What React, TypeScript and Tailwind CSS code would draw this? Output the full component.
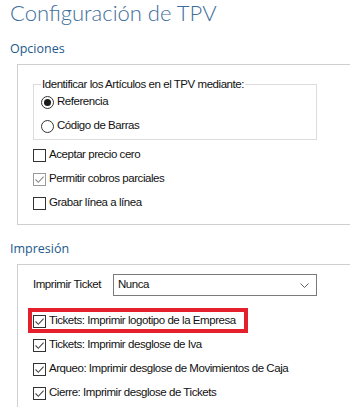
import React from "react";

const ui = "font-['Liberation_Sans',Arial,sans-serif] text-[11.5px] tracking-[-0.45px] text-[#111]";

function Check({ checked, light }: { checked?: boolean; light?: boolean }) {
  return (
    <span
      className={`flex h-[13px] w-[13px] shrink-0 items-center justify-center border bg-white ${
        light ? "border-[#9a9a9a]" : "border-[#333333]"
      }`}
    >
      {checked && (
        <svg width="11" height="11" viewBox="0 0 11 11" fill="none" aria-hidden="true">
          <path
            d="M1.5 5.5l2.8 2.8L9.6 2.6"
            stroke={light ? "#8a8a8a" : "#4a4a4a"}
            strokeWidth="1.1"
          />
        </svg>
      )}
    </span>
  );
}

function Radio({ checked }: { checked?: boolean }) {
  return (
    <span className="flex h-[13px] w-[13px] shrink-0 items-center justify-center rounded-full border border-[#333333] bg-white">
      {checked && <span className="h-[7px] w-[7px] rounded-full bg-[#1a1a1a]" />}
    </span>
  );
}

function CheckRow({ label, checked, light }: { label: string; checked?: boolean; light?: boolean }) {
  return (
    <div className="flex h-[24px] items-center gap-[3px]">
      <Check checked={checked} light={light} />
      <span className={`${ui} leading-none`}>{label}</span>
    </div>
  );
}

function SectionTitle({ children }: { children: React.ReactNode }) {
  return (
    <div className="mt-[15px] pl-[10px] font-['Open_Sans','Noto_Sans',sans-serif] text-[12.5px] leading-[18px] text-[#22598c]">
      {children}
    </div>
  );
}

export default function App() {
  return (
    <div className="h-[407px] w-[350px] overflow-hidden bg-white">
      <h1 className="pl-[10px] font-['Lato','Open_Sans',sans-serif] text-[22px] font-light leading-[25px] text-[#3d6e9b]">
        Configuración de TPV
      </h1>

      <SectionTitle>Opciones</SectionTitle>
      <div className="ml-[17px] mt-[6px] border-b border-l border-t border-[#cfcfcf] pb-[9px] pl-[15px]">
        <div className="relative mt-[19px] w-[284px] border border-[#dcdcdc] pb-px pl-[7px] pt-[5px]">
          <span className={`${ui} absolute left-[7px] top-[-8px] bg-white px-px leading-[14px]`}>
            Identificar los Artículos en el TPV mediante:
          </span>
          <div className="flex h-[24px] items-center gap-[3px]">
            <Radio checked />
            <span className={`${ui} leading-none`}>Referencia</span>
          </div>
          <div className="flex h-[24px] items-center gap-[3px]">
            <Radio />
            <span className={`${ui} leading-none`}>Código de Barras</span>
          </div>
        </div>
        <div className="mt-[3px]">
          <CheckRow label="Aceptar precio cero" />
          <CheckRow label="Permitir cobros parciales" checked light />
          <CheckRow label="Grabar línea a línea" />
        </div>
      </div>

      <SectionTitle>Impresión</SectionTitle>
      <div className="ml-[17px] mt-[6px] h-[200px] border-l border-t border-[#cfcfcf] pl-[15px]">
        <div className="mt-[9px] flex h-[22px] items-center">
          <span className={`${ui} w-[80px] leading-none`}>Imprimir Ticket</span>
          <div className="flex h-[22px] w-[204px] items-center justify-between border border-[#7a7a7a] pl-[4px] pr-[7px]">
            <span className={`${ui} leading-none`}>Nunca</span>
            <svg width="9" height="5" viewBox="0 0 9 5" fill="none" aria-hidden="true">
              <path d="M0.5 0.5l4 4 4-4" stroke="#606060" strokeWidth="1" />
            </svg>
          </div>
        </div>
        <div className="mt-[13px]">
          <div className="relative">
            <div className="pointer-events-none absolute left-[-5px] top-[-1px] h-[25px] w-[220px] border-4 border-[#e3202b]" />
            <CheckRow label="Tickets: Imprimir logotipo de la Empresa" checked />
          </div>
          <CheckRow label="Tickets: Imprimir desglose de Iva" checked />
          <CheckRow label="Arqueo: Imprimir desglose de Movimientos de Caja" checked />
          <CheckRow label="Cierre: Imprimir desglose de Tickets" checked />
        </div>
      </div>
    </div>
  );
}
